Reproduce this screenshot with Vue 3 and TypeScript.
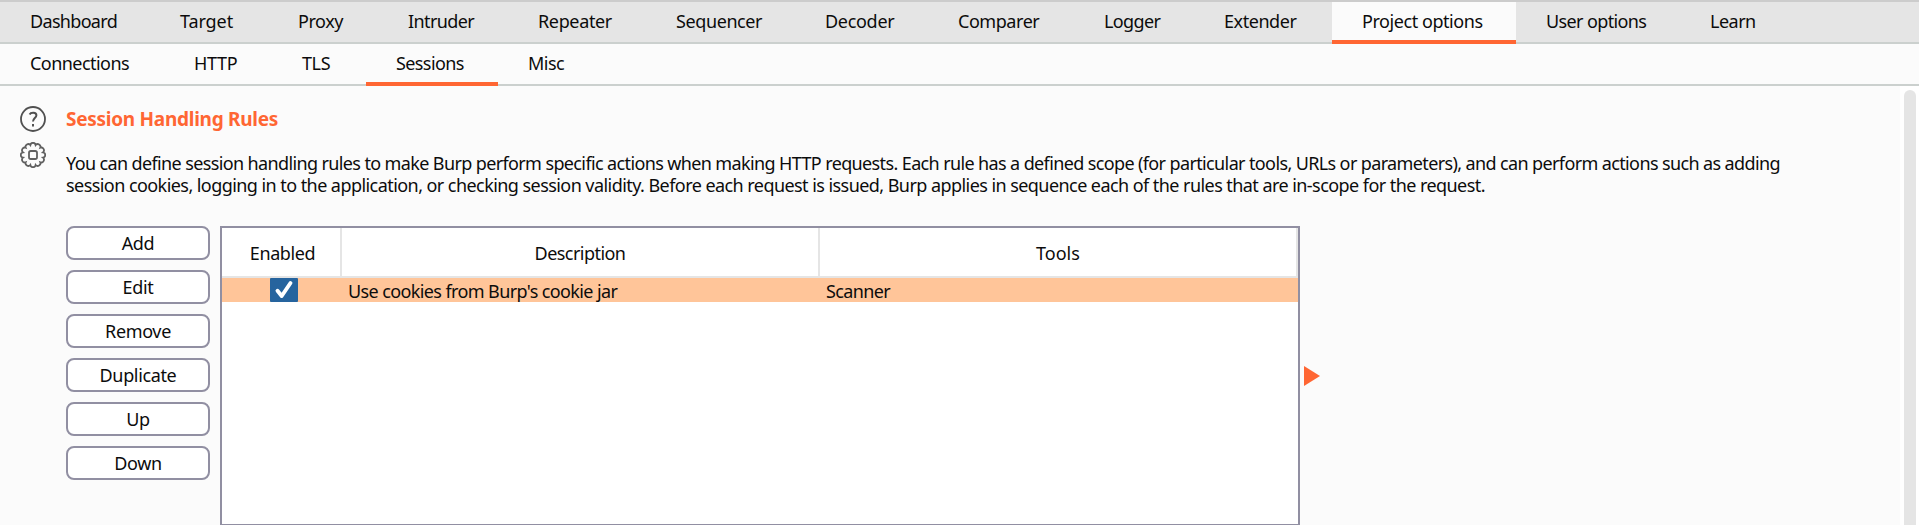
<script setup lang="ts">
interface Tab {
  label: string
  width: number
  spacing: number
}

const mainTabs: Tab[] = [
  { label: 'Dashboard', width: 150, spacing: -0.68 },
  { label: 'Target', width: 118, spacing: -0.1 },
  { label: 'Proxy', width: 110, spacing: -0.45 },
  { label: 'Intruder', width: 130, spacing: -0.6 },
  { label: 'Repeater', width: 138, spacing: -0.35 },
  { label: 'Sequencer', width: 149, spacing: -0.4 },
  { label: 'Decoder', width: 133, spacing: -0.3 },
  { label: 'Comparer', width: 146, spacing: -0.45 },
  { label: 'Logger', width: 120, spacing: -0.6 },
  { label: 'Extender', width: 138, spacing: -0.45 },
  { label: 'Project options', width: 184, spacing: -0.44 },
  { label: 'User options', width: 164, spacing: -0.62 },
  { label: 'Learn', width: 108, spacing: -0.5 },
]

const subTabs: Tab[] = [
  { label: 'Connections', width: 164, spacing: -0.55 },
  { label: 'HTTP', width: 108, spacing: -0.3 },
  { label: 'TLS', width: 94, spacing: -0.4 },
  { label: 'Sessions', width: 132, spacing: -0.6 },
  { label: 'Misc', width: 96, spacing: -0.5 },
]

const activeMain = 'Project options'
const activeSub = 'Sessions'
const actions: string[] = ['Add', 'Edit', 'Remove', 'Duplicate', 'Up', 'Down']
const rules = [{ enabled: true, description: "Use cookies from Burp's cookie jar", tools: 'Scanner' }]

const tabStyle = (tab: Tab) => ({ width: `${tab.width}px`, letterSpacing: `${tab.spacing}px` })

// Scalloped rim: equal arcs between points on a circle.
const lobes = 12
const rim = Array.from({ length: lobes + 1 }, (_, i) => {
  const angle = ((i + 0.5) * 2 * Math.PI) / lobes
  const x = (13 + 10.3 * Math.cos(angle)).toFixed(2)
  const y = (13 + 10.3 * Math.sin(angle)).toFixed(2)
  return i === 0 ? `M${x} ${y}` : `A2.7 2.7 0 0 1 ${x} ${y}`
}).join('') + 'Z'
</script>

<template>
  <div class="window">
    <nav class="tabs main-tabs">
      <div v-for="tab in mainTabs" :key="tab.label" class="tab" :class="{ active: tab.label === activeMain }" :style="tabStyle(tab)">{{ tab.label }}</div>
    </nav>
    <nav class="tabs sub-tabs">
      <div v-for="tab in subTabs" :key="tab.label" class="tab" :class="{ active: tab.label === activeSub }" :style="tabStyle(tab)">{{ tab.label }}</div>
    </nav>
    <div class="content">
      <aside class="icons">
        <svg width="26" height="26" viewBox="0 0 26 26" fill="none" stroke="#505050" stroke-width="1.8">
          <circle cx="13" cy="13" r="12" />
          <path d="M9.6 8.4C10.8 6.2 16.4 6 16.4 9.2C16.4 12 13 12.2 13 15.6M13 18V20.4" stroke-width="2" />
        </svg>
        <svg width="26" height="26" viewBox="0 0 26 26" fill="none" stroke="#606060" stroke-width="1.8">
          <path :d="rim" />
          <rect x="9" y="9" width="8" height="8" rx="1.8" />
        </svg>
      </aside>
      <main class="panel">
        <h1>Session Handling Rules</h1>
        <p><span class="lead">You can define session handling rules to make Burp perform specific actions when making HTTP requests. Each rule has a defined scope (for particular tools, URLs or parameters), and can perform actions such as adding</span><br>session cookies, logging in to the application, or checking session validity. Before each request is issued, Burp applies in sequence each of the rules that are in-scope for the request.</p>
        <div class="editor">
          <div class="actions">
            <button v-for="action in actions" :key="action" type="button">{{ action }}</button>
          </div>
          <div class="table">
            <div class="row head">
              <div class="enabled">Enabled</div>
              <div class="description">Description</div>
              <div>Tools</div>
            </div>
            <div v-for="rule in rules" :key="rule.description" class="row rule">
              <div class="check">
                <svg v-if="rule.enabled" width="28" height="24" viewBox="0 0 28 24">
                  <rect width="28" height="24" rx="1" fill="#26649e" />
                  <path d="M7.5 12.8L11.7 18L20.5 5" fill="none" stroke="#fff" stroke-width="3.9" stroke-linecap="round" stroke-linejoin="round" />
                </svg>
              </div>
              <div>{{ rule.description }}</div>
              <div>{{ rule.tools }}</div>
            </div>
          </div>
          <svg class="expand" width="16" height="20" viewBox="0 0 16 20"><path d="M0 0L16 10L0 20Z" fill="#ff6633" /></svg>
        </div>
      </main>
      <div class="scrollbar"><div class="thumb"></div></div>
    </div>
  </div>
</template>

<style>
body {
  margin: 0;
  overflow: hidden;
}
</style>

<style scoped>
.window {
  width: 1919px;
  height: 525px;
  display: flex;
  flex-direction: column;
  overflow: hidden;
  background: #fbfbfb;
  color: #0c0c0c;
  font: 18px/22px "Noto Sans", sans-serif;
}
.window * {
  box-sizing: border-box;
}
.tabs {
  display: flex;
  flex: none;
  border-bottom: 2px solid #cbd0ce;
}
.main-tabs {
  height: 44px;
  border-top: 2px solid #ccc;
  background: #e5e5e5;
}
.sub-tabs {
  height: 42px;
}
.tab {
  flex: none;
  height: 42px;
  padding: 8px 0 0 30px;
  white-space: nowrap;
}
.tab.active {
  border-bottom: 4px solid #ff6633;
  background: #fbfbfb;
}
.content {
  display: flex;
  flex: 1;
  min-height: 0;
}
.icons {
  width: 66px;
  padding: 20px 0 0 20px;
  display: flex;
  flex-direction: column;
  gap: 10px;
}
.panel {
  flex: 1;
  min-width: 0;
  padding-top: 21px;
}
h1 {
  margin: 0;
  color: #ff6633;
  font-size: 19px;
  font-weight: 700;
  line-height: 24px;
  letter-spacing: -0.27px;
}
p {
  margin: 21px 0 0;
  height: 74px;
  letter-spacing: -0.56px;
  white-space: nowrap;
}
.lead {
  letter-spacing: -0.625px;
}
.editor {
  display: flex;
  align-items: flex-start;
}
.actions {
  width: 144px;
  margin-right: 10px;
  display: flex;
  flex-direction: column;
  gap: 10px;
}
button {
  height: 34px;
  padding: 0;
  border: 2px solid #918fa2;
  border-radius: 8px;
  background: #fff;
  color: #0c0c0c;
  font: inherit;
  letter-spacing: -0.35px;
}
.table {
  width: 1080px;
  height: 300px;
  border: 2px solid #918fa2;
  background: #fff;
}
.row {
  display: grid;
  grid-template-columns: 120px 478px 478px;
}
.head {
  height: 50px;
  border-bottom: 2px solid #e5e5e5;
  line-height: 50px;
  text-align: center;
}
.head div {
  border-right: 2px solid #e5e5e5;
}
.head .enabled {
  padding-left: 3px;
  letter-spacing: -0.4px;
}
.head .description {
  letter-spacing: -0.55px;
}
.rule {
  height: 24px;
  background: #ffc599;
  line-height: 26px;
  letter-spacing: -0.61px;
}
.rule div {
  padding-left: 6px;
}
.rule .check {
  padding-left: 48px;
}
.check svg {
  display: block;
}
.expand {
  margin: 140px 0 0 4px;
}
.scrollbar {
  width: 19px;
  padding: 4px 3px 0 4px;
  background: #fff;
}
.thumb {
  height: 460px;
  border-radius: 6px;
  background: #e5e5e5;
}
</style>
